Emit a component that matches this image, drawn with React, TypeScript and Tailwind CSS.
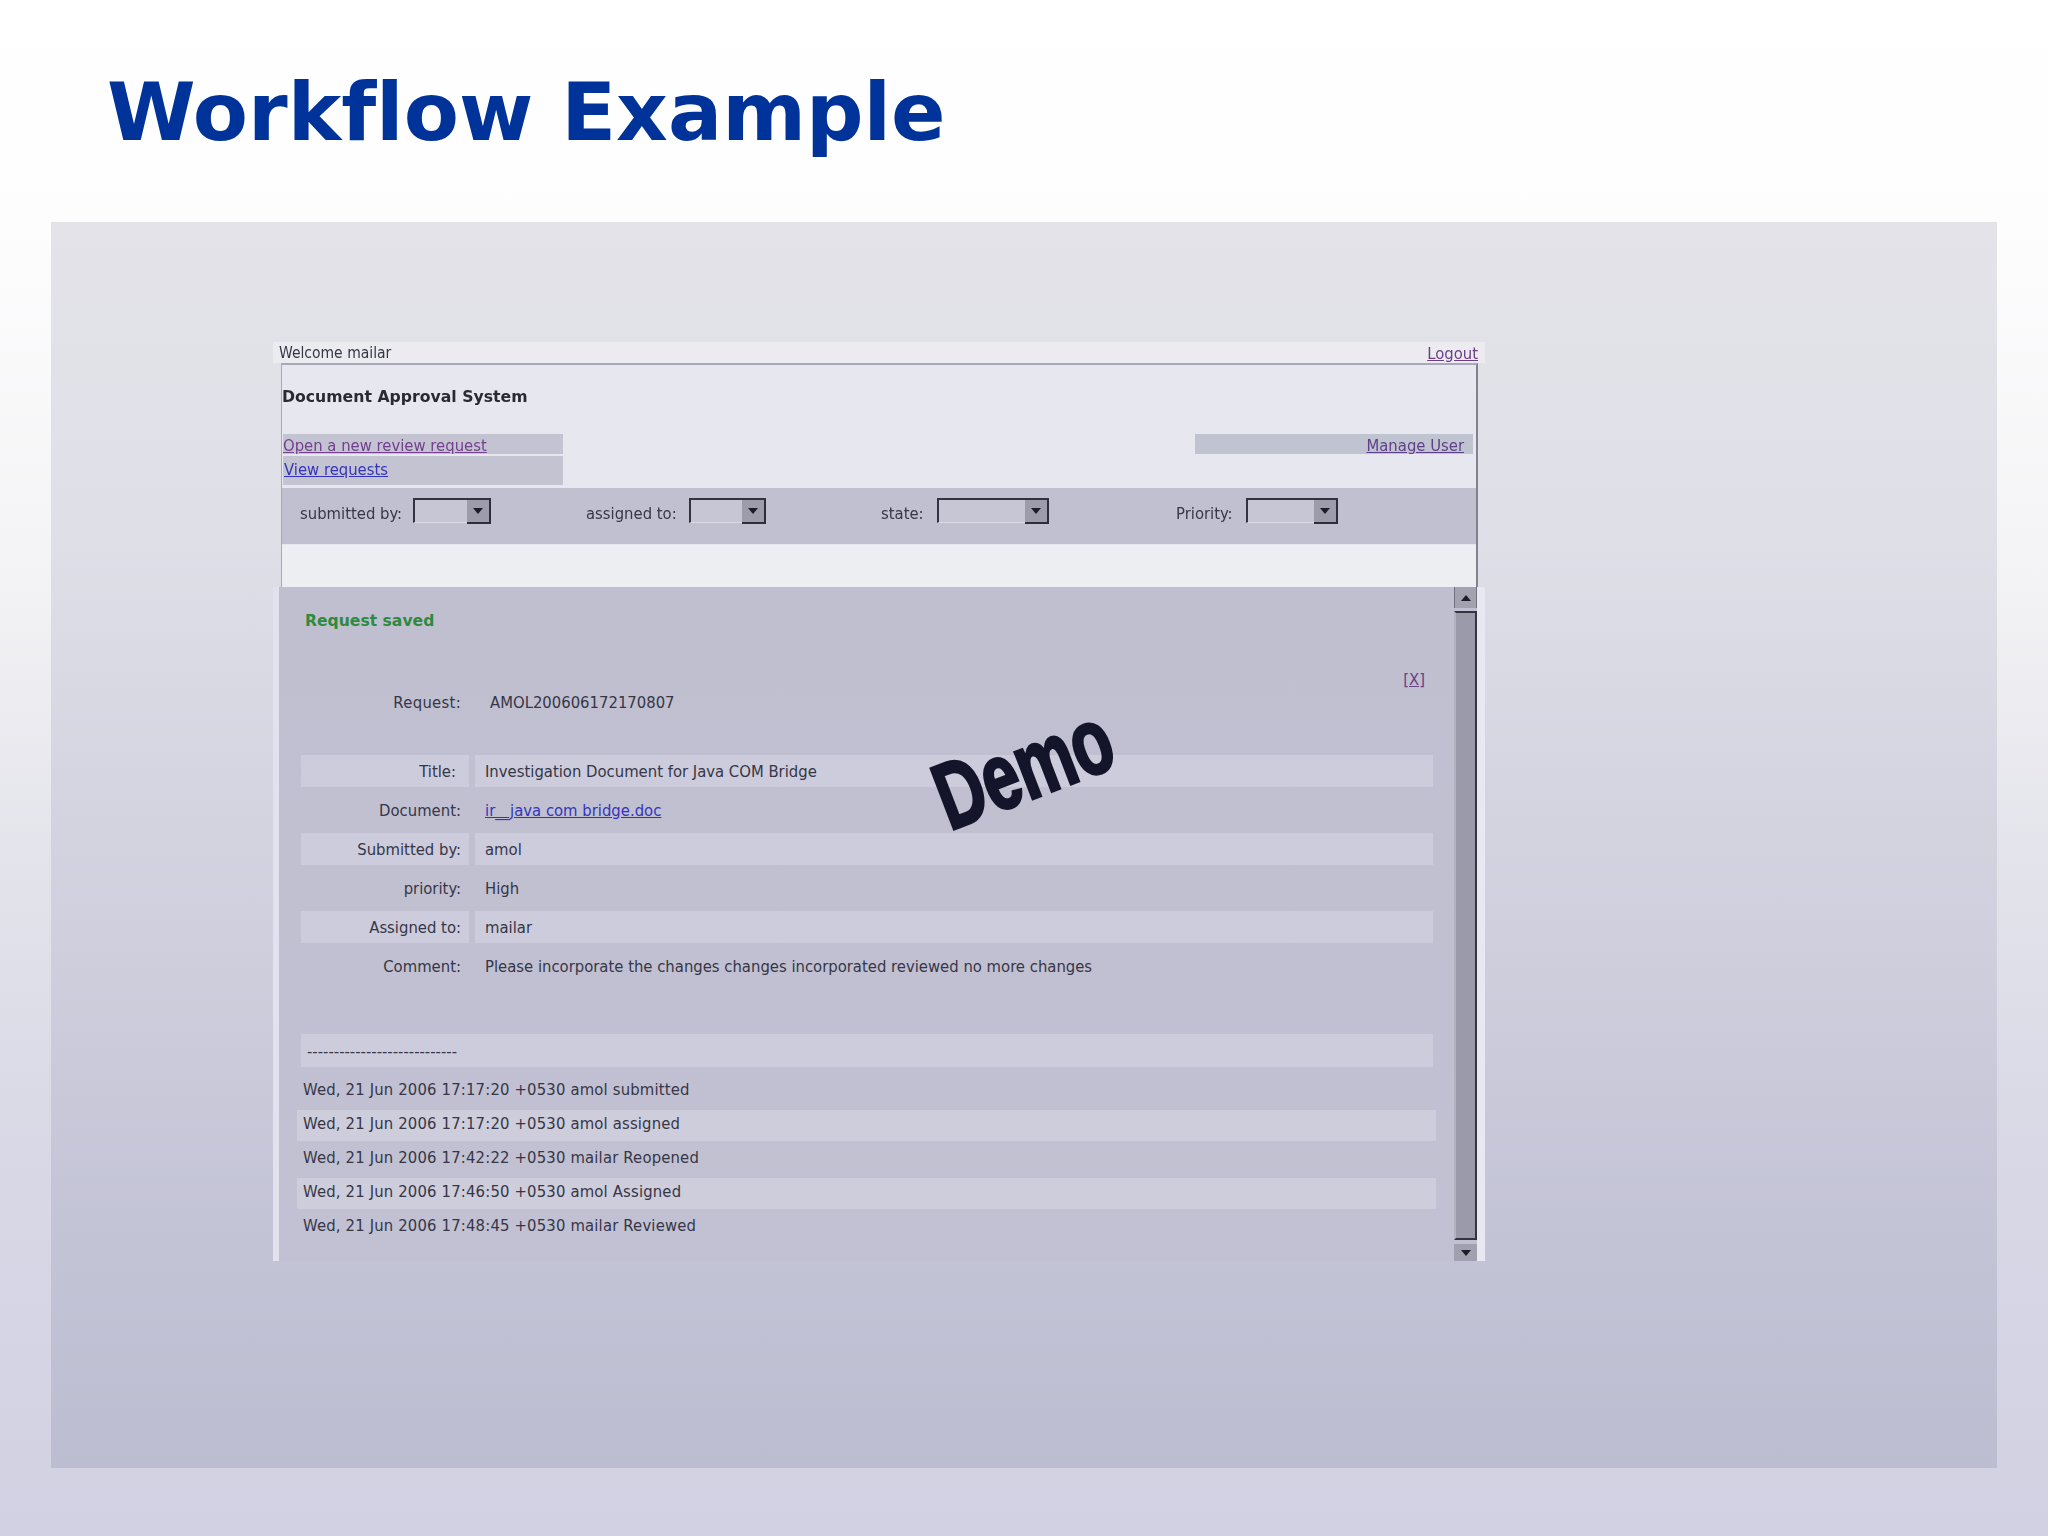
const body = "font-['DejaVu_Sans',sans-serif] font-stretch-condensed text-[16.5px] text-[#363646] [font-variant-ligatures:none]";

function Arrow({ up = false }: { up?: boolean }) {
  return (
    <svg width="10" height="6" viewBox="0 0 10 6" aria-hidden="true">
      <polygon points={up ? "5,0 10,6 0,6" : "0,0 10,0 5,6"} fill="#1c1c2c" />
    </svg>
  );
}

function Select({ width }: { width: string }) {
  return (
    <div className={`${width} h-[25px] flex border-t-2 border-l-2 border-[#33333f] bg-[#c6c6d4] border-b border-b-[#dcdce6]`}>
      <div className="flex-1" />
      <div className="w-[24px] h-[24px] -mb-[1px] flex items-center justify-center bg-[#9c9caa] border-r-2 border-b-2 border-[#2e2e3a]">
        <Arrow />
      </div>
    </div>
  );
}

function Filter({ label, labelWidth, sel, width }: { label: string; labelWidth: string; sel: string; width: string }) {
  return (
    <div className={`${width} flex items-start`}>
      <span className={`${labelWidth} leading-[25px] pt-[3px]`}>{label}</span>
      <Select width={sel} />
    </div>
  );
}

const rows = [
  { label: "Title:", value: "Investigation Document for Java COM Bridge", shade: true, pr: "pr-[13px]" },
  { label: "Document:", value: "ir__java com bridge.doc", link: true, shade: false, pr: "pr-[8px]" },
  { label: "Submitted by:", value: "amol", shade: true, pr: "pr-[8px]" },
  { label: "priority:", value: "High", shade: false, pr: "pr-[8px]" },
  { label: "Assigned to:", value: "mailar", shade: true, pr: "pr-[8px]" },
  { label: "Comment:", value: "Please incorporate the changes changes incorporated reviewed no more changes", shade: false, pr: "pr-[8px]" },
];

const history = [
  "Wed, 21 Jun 2006 17:17:20 +0530 amol submitted",
  "Wed, 21 Jun 2006 17:17:20 +0530 amol assigned",
  "Wed, 21 Jun 2006 17:42:22 +0530 mailar Reopened",
  "Wed, 21 Jun 2006 17:46:50 +0530 amol Assigned",
  "Wed, 21 Jun 2006 17:48:45 +0530 mailar Reviewed",
];

export default function App() {
  return (
    <div className="w-[2048px] h-[1536px] overflow-hidden bg-[linear-gradient(180deg,#ffffff_0%,#fdfdfe_15%,#f3f3f5_38%,#e4e4ec_55%,#d8d8e6_75%,#d1d1e3_100%)]">
      <div className="h-[222px] pt-[72px] pl-[107px]">
        <h1 className="font-['DejaVu_Sans',sans-serif] font-bold text-[80.4px] leading-[80px] text-[#003399] [font-variant-ligatures:none]">Workflow Example</h1>
      </div>

      <div className="relative ml-[51px] w-[1946px] h-[1246px] pt-[120px] pl-[222px] bg-[linear-gradient(180deg,#e3e3e8_0%,#dfdfe8_25%,#d0d0de_55%,#c4c4d7_80%,#bdbdd1_100%)]">
        <div className={`w-[1212px] blur-[0.4px] ${body}`}>
          {/* top bar */}
          <div className="h-[21px] pl-[6px] pr-[7px] pt-[3px] flex justify-between items-center bg-[#ebebf0]">
            <span className="text-[15.5px]">Welcome mailar</span>
            <a className="underline text-[#6a3f86]">Logout</a>
          </div>

          {/* header box */}
          <div className="ml-[8px] mr-[7px] h-[224px] flex flex-col border-t-2 border-t-[#a8a8b8] border-r-2 border-r-[#82828f] border-l border-l-[#a8a8b8] bg-[#e7e7f0]">
            <div className="h-[69px] pt-[20px]">
              <div className="font-bold font-stretch-normal text-[15.7px] leading-[24px] text-[#2a2a32]">Document Approval System</div>
            </div>
            <div className="flex justify-between pl-[1px] pr-[3px]">
              <div className="flex flex-col gap-[2px] w-[280px]">
                <div className="h-[20px] leading-[24px] bg-[#c3c3d2]"><a className="underline text-[#74408f]">Open a new review request</a></div>
                <div className="h-[29px] leading-[28px] bg-[#c3c3d2]"><a className="underline text-[#3434bc] pl-[1px]">View requests</a></div>
              </div>
              <div className="w-[278px] h-[20px] leading-[24px] text-right pr-[9px] bg-[#c0c3d0]">
                <a className="underline text-[#5e3f8a]">Manage User</a>
              </div>
            </div>
            <div className="mt-[3px] h-[56px] pl-[18px] pt-[10px] flex bg-[#c0c0d0]">
              <Filter label="submitted by:" labelWidth="w-[113px]" sel="w-[78px]" width="w-[286px]" />
              <Filter label="assigned to:" labelWidth="w-[103px]" sel="w-[77px]" width="w-[295px]" />
              <Filter label="state:" labelWidth="w-[56px]" sel="w-[112px]" width="w-[295px]" />
              <Filter label="Priority:" labelWidth="w-[70px]" sel="w-[92px]" width="w-[200px]" />
            </div>
            <div className="flex-1 mt-[1px] bg-[#edeef2]" />
          </div>

          {/* main area */}
          <div className="flex h-[674px]">
            <div className="w-[6px] bg-[#e2e2ee]" />
            <div className="flex-1 bg-[linear-gradient(180deg,#bfbfd0,#c1c1d3)] min-w-0">
              <div className="pt-[22px] pl-[26px] font-bold font-stretch-normal text-[15.6px] leading-[24px] text-[#2f8a3e]">Request saved</div>
              <div className="mt-[37px] pr-[29px] text-right leading-[20px]"><a className="underline text-[#6a3f86]">[X]</a></div>
              <div className="mt-[3px] flex leading-[20px]">
                <div className="w-[182px] text-right tracking-[0.3px]">Request:</div>
                <div className="pl-[29px]">AMOL200606172170807</div>
              </div>

              <div className="relative mt-[42px] ml-[22px] w-[1132px] grid grid-cols-[168px_958px] gap-x-[6px] gap-y-[7px]">
                {rows.map((r) => (
                  <div key={r.label} className="contents">
                    <div className={`h-[32px] leading-[33px] text-right ${r.pr} ${r.shade ? "bg-[#ccccdc]" : ""}`}>{r.label}</div>
                    <div className={`h-[32px] leading-[33px] pl-[10px] ${r.shade ? "bg-[#ccccdc]" : ""}`}>
                      {r.link ? <a className="underline text-[#3434bc]">{r.value}</a> : r.value}
                    </div>
                  </div>
                ))}
                <div className="absolute left-[592px] top-[-34px] font-['Liberation_Sans',sans-serif] font-bold text-[94px] leading-[94px] text-[#14142a] [-webkit-text-stroke:3px_#14142a] rotate-[-21deg] scale-x-[0.7]">Demo</div>
              </div>

              <div className="mt-[52px] ml-[22px] w-[1132px] h-[33px] pl-[6px] leading-[35px] bg-[#ccccdc]">----------------------------</div>

              <div className="mt-[9px] ml-[18px] w-[1139px] flex flex-col gap-[3px]">
                {history.map((h, i) => (
                  <div key={h} className={`h-[31px] pl-[6px] pb-[5px] leading-[27px] tracking-[0.17px] ${i % 2 === 1 ? "bg-[#cdcddc]" : ""}`}>{h}</div>
                ))}
              </div>
            </div>

            {/* scrollbar */}
            <div className="w-[23px] flex flex-col bg-[#c0c0d2]">
              <div className="h-[21px] flex items-center justify-center bg-[#a2a2b0] border-x border-[#72727f]"><Arrow up /></div>
              <div className="mt-[3px] h-[629px] bg-[#9a9aaa] border-l-2 border-l-[#b2b2c0] border-r-2 border-r-[#34343f] border-b-2 border-b-[#34343f] border-t-2 border-t-[#34343f]" />
              <div className="mt-[4px] h-[17px] flex items-center justify-center bg-[#a0a0ae]"><Arrow /></div>
            </div>
            <div className="w-[8px] bg-[#e8e8f2]" />
          </div>
        </div>
      </div>
    </div>
  );
}
